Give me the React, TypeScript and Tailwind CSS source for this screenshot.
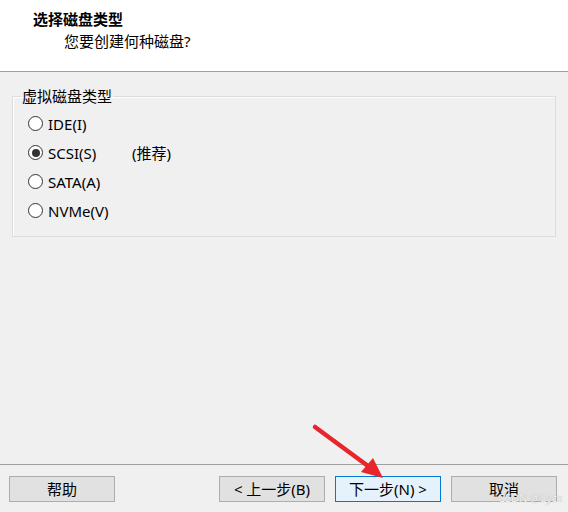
import { useState } from 'react';

const FONT = { fontFamily: '"Segoe UI", "Noto Sans", "Noto Sans CJK SC", sans-serif' };

const DISKS = [
  { id: 'ide', label: 'IDE(I)' },
  { id: 'scsi', label: 'SCSI(S)', note: '(推荐)' },
  { id: 'sata', label: 'SATA(A)' },
  { id: 'nvme', label: 'NVMe(V)' },
];

function Radio({ checked }: { checked: boolean }) {
  return (
    <span className="w-[15px] h-[15px] rounded-full border border-[#333333] bg-white flex items-center justify-center shrink-0">
      {checked && <span className="w-[8px] h-[8px] rounded-full bg-[#333333]"></span>}
    </span>
  );
}

function Button({ children, primary }: { children: React.ReactNode; primary?: boolean }) {
  return (
    <button
      className={
        primary
          ? 'w-[106px] h-[26px] border border-[#0078d7] bg-[#e5f1fb] text-[15px] leading-none text-black'
          : 'w-[106px] h-[26px] border border-[#adadad] bg-[#e1e1e1] text-[15px] leading-none text-black'
      }
    >
      {children}
    </button>
  );
}

export default function App() {
  const [disk, setDisk] = useState('scsi');

  return (
    <div className="w-[568px] h-[512px] flex flex-col bg-[#f0f0f0] text-black relative overflow-hidden" style={FONT}>
      <div className="h-[72px] bg-white border-b border-[#a0a0a0] pl-[33px] pt-[9px] shrink-0">
        <div className="text-[15px] leading-[20px] font-bold">选择磁盘类型</div>
        <div className="text-[15px] leading-[20px] pl-[31px] mt-[2px]">您要创建何种磁盘?</div>
      </div>

      <div className="flex-1 px-[12px]">
        <fieldset className="mt-[14px] w-[544px] border border-[#dcdcdc] px-[8px] pb-[11px] shadow-[inset_1px_1px_0_#ffffff]">
          <legend className="px-[1px] text-[15px] leading-[20px]">虚拟磁盘类型</legend>
          <div className="pt-[3px] pl-[7px] flex flex-col">
            {DISKS.map((d) => (
              <label key={d.id} className="h-[29px] flex items-center cursor-default" onClick={() => setDisk(d.id)}>
                <Radio checked={disk === d.id} />
                <span className="ml-[5px] w-[84px] text-[15px] leading-[20px]">{d.label}</span>
                {d.note && <span className="text-[15px] leading-[20px]">{d.note}</span>}
              </label>
            ))}
          </div>
        </fieldset>
      </div>

      <div className="h-[48px] border-t border-[#a0a0a0] shrink-0 flex items-start pt-[11px] pl-[9px]">
        <Button>帮助</Button>
        <div className="ml-[104px] flex gap-[10px]">
          <Button>&lt; 上一步(B)</Button>
          <Button primary>下一步(N) &gt;</Button>
          <Button>取消</Button>
        </div>
      </div>

      {/* annotation arrow over the screenshot */}
      <svg className="absolute left-0 top-0 pointer-events-none" width="568" height="512">
        <line x1="315" y1="427" x2="368" y2="466" stroke="#e8252b" strokeWidth="4.5" strokeLinecap="round" />
        <polygon points="383,478 361,472 373,458" fill="#e8252b" />
      </svg>

      <div className="absolute left-[498px] top-[491px] text-[11px] leading-[13px] text-[#f4f4f4] [text-shadow:0_0_1px_#9a9a9a] pointer-events-none">
        CSDN @Lycx
      </div>
    </div>
  );
}
